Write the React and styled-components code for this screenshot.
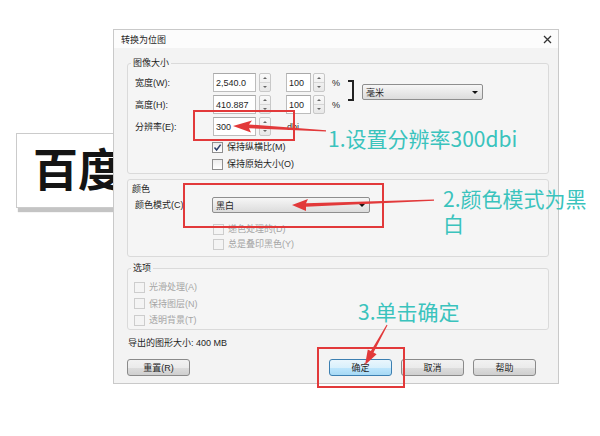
import React from 'react';
import styled, { createGlobalStyle } from 'styled-components';

const Global = createGlobalStyle`
  html, body { margin: 0; padding: 0; background: #fff; }
  body { font-family: "Liberation Sans", "Noto Sans CJK SC", sans-serif; }
`;

const Canvas = styled.div`
  position: relative;
  width: 600px;
  height: 436px;
  overflow: hidden;
  background: #fff;
`;

const LogoCard = styled.div`
  position: absolute;
  left: 16px;
  top: 133px;
  width: 200px;
  height: 75px;
  box-sizing: border-box;
  border: 1px solid #cbcbcb;
  background: #fff;
  box-shadow: 2px 4px 1px #c4c4c4;
  padding: 11px 0 0 16px;
`;

const LogoText = styled.div`
  font-family: "Noto Sans CJK SC", sans-serif;
  font-weight: 700;
  font-size: 45px;
  line-height: 45px;
  color: #141414;
`;

const Dialog = styled.div`
  position: absolute;
  left: 113px;
  top: 29px;
  width: 446px;
  height: 355px;
  box-sizing: border-box;
  border: 1px solid #c9c9c9;
  background: #f3f3f3;
  display: flex;
  flex-direction: column;
  font-size: 9px;
  color: #1f1f1f;
`;

const TitleBar = styled.div`
  height: 18px;
  flex: none;
  background: #fcfcfc;
  display: flex;
  align-items: center;
  justify-content: space-between;
  padding: 0 6px 0 7px;
`;

const Body = styled.div`
  display: flex;
  flex-direction: column;
  padding: 10px 9px 0 13px;
`;

const Group = styled.fieldset`
  margin: ${p => p.$mt || 0}px 0 0;
  padding: ${p => p.$pad};
  border: 1px solid #dadada;
  border-radius: 3px;
  min-width: 0;
  background: #f5f5f5;
`;

const Legend = styled.legend`
  padding: 0 2px;
  margin-left: ${p => p.$ml}px;
  font-size: 9px;
  line-height: 10px;
`;

const Panel = styled.div`
  margin-top: 5px;
  border: 1px solid #dadada;
  border-radius: 3px;
  padding: 4px 0 5px 7px;
  background: #f5f5f5;
`;

const PanelTitle = styled.div`
  line-height: 10px;
  margin-left: -3px;
`;

const SizeGrid = styled.div`
  display: grid;
  grid-template-columns: 78px 73px 62px 14px 121px;
  grid-template-rows: 19px 19px 19px;
  row-gap: 3px;
  align-items: center;
`;

const Label = styled.span`
  line-height: 10px;
  white-space: nowrap;
`;

const SpinField = styled.div`
  display: flex;
  align-items: center;
  gap: ${p => p.$gap}px;
`;

const TextInput = styled.div`
  width: ${p => p.$w}px;
  height: 19px;
  box-sizing: border-box;
  border: 1px solid #bcbcbc;
  border-top-color: #a9a9a9;
  background: #fff;
  padding-left: 2px;
  display: flex;
  align-items: center;
`;

const Spinner = styled.div`
  width: 12px;
  height: 19px;
  box-sizing: border-box;
  border: 1px solid #c8c8c8;
  border-radius: 2px;
  background: linear-gradient(#f9f9f9, #e8e8e8);
  display: flex;
  flex-direction: column;
`;

const SpinHalf = styled.div`
  flex: 1;
  display: flex;
  align-items: center;
  justify-content: center;
  &::after {
    content: '';
    border-left: 2px solid transparent;
    border-right: 2px solid transparent;
    ${p => (p.$up ? 'border-bottom: 2px solid #666;' : 'border-top: 2px solid #666;')}
  }
  & + & {
    border-top: 1px solid #d6d6d6;
  }
`;

const Unit = styled.span`
  margin-left: ${p => p.$ml}px;
  line-height: 10px;
`;

const Bracket = styled.div`
  grid-column: 4;
  grid-row: 1 / 3;
  align-self: start;
  margin-top: 7px;
  width: 4px;
  height: 17px;
  border: 2px solid #222;
  border-left: none;
`;

const Select = styled.div`
  width: ${p => p.$w}px;
  height: 16px;
  box-sizing: border-box;
  border: 1px solid #8e8e8e;
  border-radius: 2px;
  background: linear-gradient(#f6f6f6, #dcdcdc);
  display: flex;
  align-items: center;
  justify-content: space-between;
  padding: 0 4px 0 3px;
  &::after {
    content: '';
    border-left: 3px solid transparent;
    border-right: 3px solid transparent;
    border-top: 3px solid #111;
  }
`;

const UnitSelect = styled(Select)`
  grid-column: 5;
  grid-row: 1 / 3;
  align-self: start;
  margin-top: 11px;
`;

const ColorRow = styled.div`
  display: grid;
  grid-template-columns: 77px auto;
  align-items: center;
  margin-top: 3px;
`;

const CheckList = styled.div`
  display: flex;
  flex-direction: column;
  gap: ${p => p.$gap}px;
  margin: ${p => p.$m};
`;

const CheckRow = styled.div`
  display: flex;
  align-items: center;
  gap: 4px;
  height: 14px;
  line-height: 10px;
  color: ${p => (p.$disabled ? '#a5a5a5' : 'inherit')};
`;

const Box = styled.span`
  width: 11px;
  height: 11px;
  box-sizing: border-box;
  border: 1px solid ${p => (p.$disabled ? '#cdcdcd' : '#8f8f8f')};
  background: ${p => (p.$disabled ? '#f4f4f4' : 'linear-gradient(#ededed, #ffffff)')};
  display: flex;
  align-items: center;
  justify-content: center;
`;

const SizeNote = styled.div`
  margin: 8px 0 0 1px;
  line-height: 10px;
`;

const ButtonRow = styled.div`
  display: flex;
  gap: 9px;
  margin-top: 11px;
  padding-right: 13px;
`;

const Button = styled.button`
  width: 63px;
  height: 17px;
  box-sizing: border-box;
  padding: 0;
  margin: 0 ${p => (p.$push ? 'auto' : '0')} 0 0;
  border: 1px solid ${p => (p.$primary ? '#3c7fb1' : '#8a8a8a')};
  border-radius: 3px;
  background: ${p =>
    p.$primary
      ? 'linear-gradient(#eaf6fd 0%, #d9f0fc 50%, #bee6fd 51%, #a7d9f5 100%)'
      : 'linear-gradient(#f2f2f2 0%, #ebebeb 50%, #dddddd 51%, #cfcfcf 100%)'};
  font-family: inherit;
  font-size: 9px;
  color: #1f1f1f;
  display: flex;
  align-items: center;
  justify-content: center;
`;

const Highlight = styled.div`
  position: absolute;
  left: ${p => p.$x}px;
  top: ${p => p.$y}px;
  width: ${p => p.$w}px;
  height: ${p => p.$h}px;
  box-sizing: border-box;
  border: 2px solid #e2393a;
`;

const Callout = styled.div`
  position: absolute;
  left: ${p => p.$x}px;
  top: ${p => p.$y}px;
  width: ${p => p.$w}px;
  font-family: "Noto Sans CJK SC", sans-serif;
  font-size: 21px;
  line-height: 25px;
  color: #3ac3bd;
`;

const ArrowLayer = styled.svg`
  position: absolute;
  left: 0;
  top: 0;
  pointer-events: none;
`;

const Check = () => (
  <svg width="9" height="9" viewBox="0 0 9 9">
    <path d="M1.5 4.6 L3.6 7 L7.6 1.6" fill="none" stroke="#2c3f6a" strokeWidth="1.5" />
  </svg>
);

const CheckItem = ({ label, checked, disabled }) => (
  <CheckRow $disabled={disabled}>
    <Box $disabled={disabled}>{checked && <Check />}</Box>
    {label}
  </CheckRow>
);

const Spin = ({ w, value, gap }) => (
  <SpinField $gap={gap}>
    <TextInput $w={w}>{value}</TextInput>
    <Spinner>
      <SpinHalf $up />
      <SpinHalf />
    </Spinner>
  </SpinField>
);

export default function App() {
  return (
    <Canvas>
      <Global />
      <LogoCard>
        <LogoText>百度</LogoText>
      </LogoCard>

      <Dialog>
        <TitleBar>
          <span>转换为位图</span>
          <svg width="9" height="9" viewBox="0 0 9 9">
            <path d="M1 1 L8 8 M8 1 L1 8" stroke="#333" strokeWidth="1.3" />
          </svg>
        </TitleBar>
        <Body>
          <Group $pad="5px 0 2px 7px">
            <Legend $ml={-4}>图像大小</Legend>
            <SizeGrid>
              <Bracket />
              <UnitSelect $w={121}>毫米</UnitSelect>
              <Label>宽度(W):</Label>
              <Spin w={43} value="2,540.0" gap={3} />
              <SpinField $gap={2}>
                <Spin w={25} value="100" gap={2} />
                <Unit $ml={5}>%</Unit>
              </SpinField>
              <Label>高度(H):</Label>
              <Spin w={43} value="410.887" gap={3} />
              <SpinField $gap={2}>
                <Spin w={25} value="100" gap={2} />
                <Unit $ml={5}>%</Unit>
              </SpinField>
              <Label>分辨率(E):</Label>
              <Spin w={43} value="300" gap={3} />
              <Unit $ml={1}>dbi</Unit>
            </SizeGrid>
            <CheckList $gap={3} $m="4px 0 0 77px">
              <CheckItem label="保持纵横比(M)" checked />
              <CheckItem label="保持原始大小(O)" />
            </CheckList>
          </Group>

          <Panel>
            <PanelTitle>颜色</PanelTitle>
            <ColorRow>
              <Label>颜色模式(C)</Label>
              <Select $w={158}>黑白</Select>
            </ColorRow>
            <CheckList $gap={1} $m="9px 0 0 78px">
              <CheckItem label="递色处理的(D)" disabled />
              <CheckItem label="总是叠印黑色(Y)" disabled />
            </CheckList>
          </Panel>

          <Group $mt={6} $pad="7px 0 2px 6px">
            <Legend $ml={-3}>选项</Legend>
            <CheckList $gap={2.5} $m="0">
              <CheckItem label="光滑处理(A)" disabled />
              <CheckItem label="保持图层(N)" disabled />
              <CheckItem label="透明背景(T)" disabled />
            </CheckList>
          </Group>

          <SizeNote>导出的图形大小: 400 MB</SizeNote>

          <ButtonRow>
            <Button $push>重置(R)</Button>
            <Button $primary>确定</Button>
            <Button>取消</Button>
            <Button>帮助</Button>
          </ButtonRow>
        </Body>
      </Dialog>

      <Highlight $x={193} $y={110} $w={102} $h={31} />
      <Highlight $x={183} $y={183} $w={201} $h={45} />
      <Highlight $x={317} $y={347} $w={88} $h={41} />

      <Callout $x={328} $y={126} $w={220}>1.设置分辨率300dbi</Callout>
      <Callout $x={443} $y={186} $w={150}>2.颜色模式为黑白</Callout>
      <Callout $x={358} $y={299} $w={160}>3.单击确定</Callout>

      <ArrowLayer width="600" height="436" viewBox="0 0 600 436">
        <polygon
          fill="#e2393a"
          points="233,126 252,120.5 249,124.4 326,130.2 326,131.4 249,128.2 251,132.6"
        />
        <polygon
          fill="#e2393a"
          points="292,205 308,199 306,203.2 434,199.4 434,200.8 306,206.8 306,211"
        />
        <polygon
          fill="#e2393a"
          points="365,365 376.6,354.2 373.5,352.5 387.5,325.2 386.6,324.8 370.9,351.1 367.8,349.4"
        />
      </ArrowLayer>
    </Canvas>
  );
}
